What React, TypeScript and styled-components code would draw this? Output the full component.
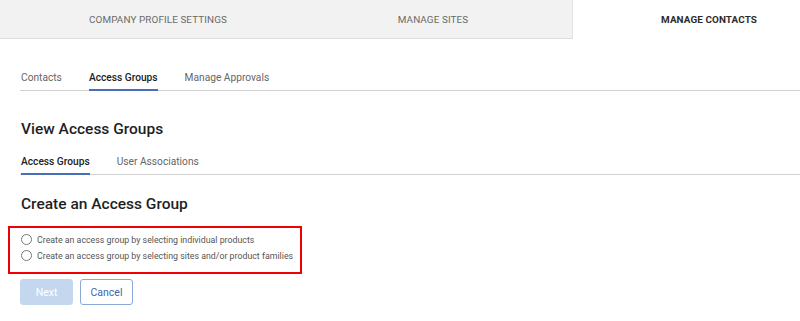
import React, { useState } from 'react';
import styled, { createGlobalStyle } from 'styled-components';

const GlobalStyle = createGlobalStyle`
  html, body {
    margin: 0;
    padding: 0;
    background: #ffffff;
    font-family: Roboto, 'Liberation Sans', Arial, sans-serif;
    overflow: hidden;
  }
`;

const topTabs = [
  { label: 'COMPANY PROFILE SETTINGS', width: 294, offset: 22 },
  { label: 'MANAGE SITES', width: 279, offset: 0 },
  { label: 'MANAGE CONTACTS', width: 227, offset: 46 },
];

const sectionTabs = ['Contacts', 'Access Groups', 'Manage Approvals'];
const groupTabs = ['Access Groups', 'User Associations'];
const options = [
  'Create an access group by selecting individual products',
  'Create an access group by selecting sites and/or product families',
];

const App: React.FC = () => {
  const [section, setSection] = useState(1);
  const [groupTab, setGroupTab] = useState(0);
  const [choice, setChoice] = useState<number | null>(null);

  return (
    <Page>
      <GlobalStyle />
      <TopBar>
        {topTabs.map((tab, i) => (
          <TopTab key={tab.label} $width={tab.width} $offset={tab.offset} $active={i === 2}>
            {tab.label}
          </TopTab>
        ))}
      </TopBar>

      <Content>
        <TabRow $top={28}>
          {sectionTabs.map((label, i) => (
            <TabItem key={label} $active={i === section} onClick={() => setSection(i)}>
              {label}
            </TabItem>
          ))}
        </TabRow>

        <Heading $top={28}>View Access Groups</Heading>

        <TabRow $top={12}>
          {groupTabs.map((label, i) => (
            <TabItem key={label} $active={i === groupTab} onClick={() => setGroupTab(i)}>
              {label}
            </TabItem>
          ))}
        </TabRow>

        <Heading $top={19}>Create an Access Group</Heading>

        <OptionBox>
          {options.map((label, i) => (
            <OptionRow key={label} onClick={() => setChoice(i)}>
              <Radio $checked={choice === i} />
              <OptionText>{label}</OptionText>
            </OptionRow>
          ))}
        </OptionBox>

        <Actions>
          <PrimaryButton disabled={choice === null}>Next</PrimaryButton>
          <SecondaryButton>Cancel</SecondaryButton>
        </Actions>
      </Content>
    </Page>
  );
};

export default App;

const Page = styled.div`
  width: 800px;
  height: 321px;
  background: #ffffff;
`;

const TopBar = styled.div`
  display: flex;
  height: 39px;
`;

const TopTab = styled.div<{ $width: number; $offset: number; $active?: boolean }>`
  box-sizing: border-box;
  width: ${(p) => p.$width}px;
  padding-left: ${(p) => p.$offset}px;
  display: flex;
  align-items: center;
  justify-content: center;
  font-size: 9.9px;
  letter-spacing: 0.1px;
  color: ${(p) => (p.$active ? '#2b2b2b' : '#6a6a6a')};
  font-weight: ${(p) => (p.$active ? 700 : 400)};
  background: ${(p) => (p.$active ? '#ffffff' : '#f2f2f2')};
  border-bottom: 1px solid ${(p) => (p.$active ? 'transparent' : '#dcdcdc')};
  border-right: 1px solid ${(p) => (p.$active ? 'transparent' : '#e2e2e2')};

  &:nth-child(1) {
    border-right: none;
  }
`;

const Content = styled.div`
  padding-left: 20px;
  display: flex;
  flex-direction: column;
  align-items: flex-start;
`;

const TabRow = styled.div<{ $top: number }>`
  align-self: stretch;
  display: flex;
  gap: 27px;
  margin-top: ${(p) => p.$top}px;
  padding-left: 1px;
  border-bottom: 1px solid #d2d2d2;
`;

const TabItem = styled.div<{ $active?: boolean }>`
  font-size: 10.2px;
  line-height: 22px;
  color: ${(p) => (p.$active ? '#222222' : '#666666')};
  font-weight: ${(p) => (p.$active ? 500 : 400)};
  border-bottom: 2px solid ${(p) => (p.$active ? '#4a6fb8' : 'transparent')};
  margin-bottom: -1px;
  cursor: pointer;
`;

const Heading = styled.h2<{ $top: number }>`
  margin: ${(p) => p.$top}px 0 0 1px;
  font-size: 15.5px;
  line-height: 20px;
  font-weight: 500;
  color: #1f1f1f;
`;

const OptionBox = styled.div`
  margin: 12px 0 0 -12px;
  width: 294px;
  height: 48px;
  box-sizing: border-box;
  border: 2px solid #f00000;
  padding: 6px 0 0 11px;
  display: flex;
  flex-direction: column;
  gap: 5px;
`;

const OptionRow = styled.label`
  display: flex;
  align-items: center;
  gap: 5px;
  height: 11px;
  cursor: pointer;
`;

const Radio = styled.span<{ $checked?: boolean }>`
  width: 9px;
  height: 9px;
  border-radius: 50%;
  border: 1px solid #777777;
  background: ${(p) => (p.$checked ? 'radial-gradient(#4a6fb8 0 2.5px, #fff 3px)' : '#ffffff')};
  flex-shrink: 0;
`;

const OptionText = styled.span`
  font-size: 8.8px;
  color: #555555;
  white-space: nowrap;
`;

const Actions = styled.div`
  display: flex;
  gap: 7px;
  margin-top: 5px;
`;

const BaseButton = styled.button`
  box-sizing: border-box;
  height: 26px;
  width: 53px;
  border-radius: 3px;
  font-family: inherit;
  font-size: 10.5px;
  padding: 0;
`;

const PrimaryButton = styled(BaseButton)`
  background: #c3d8ef;
  border: 1px solid #c3d8ef;
  color: #ffffff;
`;

const SecondaryButton = styled(BaseButton)`
  background: #ffffff;
  border: 1px solid #8aa9d8;
  color: #3d66b3;
`;
